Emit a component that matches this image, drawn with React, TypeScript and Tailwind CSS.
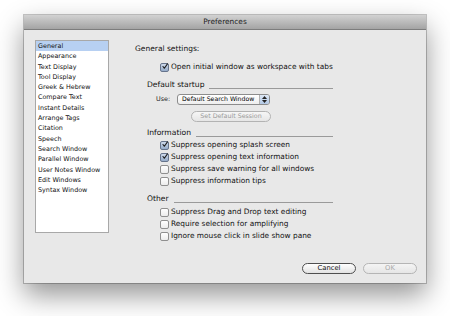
import React from "react";

const font = { fontFamily: '"DejaVu Sans", "Liberation Sans", sans-serif' };

function Check({ checked }: { checked?: boolean }) {
  return (
    <div
      className={
        "w-[9px] h-[9px] rounded-[2px] border shrink-0 flex items-center justify-center " +
        (checked
          ? "border-[#66748c] bg-gradient-to-b from-[#cdd9ea] to-[#95abc9]"
          : "border-[#8f8f8f] bg-gradient-to-b from-[#ffffff] to-[#ececec]")
      }
    >
      {checked && (
        <svg width="9" height="9" viewBox="0 0 9 9" className="-mt-[2px] ml-[1px]">
          <path d="M1.5 4.5 L3.6 7.2 L8.2 0.5" fill="none" stroke="#1d1d1d" strokeWidth="1.6" strokeLinecap="round" strokeLinejoin="round" />
        </svg>
      )}
    </div>
  );
}

function CheckRow({ label, checked, className = "" }: { label: string; checked?: boolean; className?: string }) {
  return (
    <div className={"flex items-center gap-[2px] h-[12px] pl-[25px] " + className}>
      <Check checked={checked} />
      <span className="text-[7.4px] text-[#111] leading-none whitespace-nowrap">{label}</span>
    </div>
  );
}

function Group({ label, className = "" }: { label: string; className?: string }) {
  return (
    <div className={"flex items-center h-[12px] ml-[12px] w-[186px] " + className}>
      <span className="text-[7.6px] text-[#111] leading-none whitespace-nowrap">{label}</span>
      <div className="flex-1 h-px bg-[#9a9a9a] ml-[5px] mt-[6px]" />
    </div>
  );
}

const items = [
  "General",
  "Appearance",
  "Text Display",
  "Tool Display",
  "Greek & Hebrew",
  "Compare Text",
  "Instant Details",
  "Arrange Tags",
  "Citation",
  "Speech",
  "Search Window",
  "Parallel Window",
  "User Notes Window",
  "Edit Windows",
  "Syntax Window",
];

export default function App() {
  return (
    <div className="w-[450px] h-[316px] bg-white overflow-hidden pt-[15px] pl-[24px]" style={font}>
      <div className="w-[402px] h-[268px] bg-[#e8e8e8] flex flex-col shadow-[0_0_0_1px_rgba(0,0,0,0.22),0_12px_26px_rgba(0,0,0,0.42)]">
        {/* title bar */}
        <div className="h-[15px] shrink-0 bg-gradient-to-b from-[#d2d2d2] to-[#a4a4a4] border-b border-[#7d7d7d] flex items-center justify-center">
          <span className="text-[7.4px] text-[#202020] leading-none">Preferences</span>
        </div>
        {/* main */}
        <div className="flex-1 flex pt-[10px] pl-[11px]">
          <div className="w-[74px] h-[193px] bg-white border border-[#a8a8a8] shrink-0 flex flex-col">
            {items.map((it, i) => (
              <div
                key={it}
                className={
                  "h-[10.3px] pl-[2px] flex items-center text-[6.4px] leading-none text-[#111] whitespace-nowrap " +
                  (i === 0 ? "bg-[#b7d0f2]" : "")
                }
              >
                {it}
              </div>
            ))}
          </div>
          <div className="ml-[26px] flex flex-col">
            <div className="h-[12px] mt-[3px] flex items-center text-[7.5px] leading-none text-[#111] whitespace-nowrap">
              General settings:
            </div>
            <CheckRow className="mt-[6px]" checked label="Open initial window as workspace with tabs" />
            <Group className="mt-[6px]" label="Default startup" />
            <div className="h-[12px] mt-[2px] flex items-center pl-[21px]">
              <span className="text-[6.4px] leading-none text-[#222]">Use:</span>
              <div className="ml-[7px] w-[93px] h-[11px] rounded-[3px] border border-[#8c8c8c] bg-gradient-to-b from-white to-[#eeeeee] flex items-center">
                <span className="flex-1 pl-[4px] text-[6.2px] leading-none text-[#000] whitespace-nowrap overflow-hidden">Default Search Window</span>
                <div className="w-[10px] shrink-0 h-full border-l border-[#b0b0b0] rounded-r-[2px] bg-gradient-to-b from-[#dde8f6] to-[#b2c8e5] flex flex-col items-center justify-center gap-[1px]">
                  <svg width="5" height="3" viewBox="0 0 5 3"><path d="M0 3 L2.5 0 L5 3Z" fill="#222" /></svg>
                  <svg width="5" height="3" viewBox="0 0 5 3"><path d="M0 0 L2.5 3 L5 0Z" fill="#222" /></svg>
                </div>
              </div>
            </div>
            <div className="h-[11px] mt-[6px] pl-[56px] flex">
              <div className="w-[80px] h-[11px] rounded-full border border-[#b3b3b3] bg-gradient-to-b from-[#f6f6f6] to-[#e6e6e6] flex items-center justify-center">
                <span className="text-[6.3px] leading-none text-[#9a9a9a] whitespace-nowrap">Set Default Session</span>
              </div>
            </div>
            <Group className="mt-[5px]" label="Information" />
            <CheckRow checked label="Suppress opening splash screen" />
            <CheckRow checked label="Suppress opening text information" />
            <CheckRow label="Suppress save warning for all windows" />
            <CheckRow label="Suppress information tips" />
            <Group className="mt-[6px]" label="Other" />
            <CheckRow className="mt-[1px]" label="Suppress Drag and Drop text editing" />
            <CheckRow label="Require selection for amplifying" />
            <CheckRow label="Ignore mouse click in slide show pane" />
          </div>
        </div>
        {/* footer */}
        <div className="h-[11px] mb-[9px] flex justify-end gap-[7px] pr-[9px] shrink-0">
          <div className="w-[54px] h-[11px] rounded-full border border-[#4f4f4f] bg-gradient-to-b from-white to-[#e2e2e2] flex items-center justify-center">
            <span className="text-[6.8px] leading-none text-[#111]">Cancel</span>
          </div>
          <div className="w-[54px] h-[11px] rounded-full border border-[#b5b5b5] bg-gradient-to-b from-[#f4f4f4] to-[#e6e6e6] flex items-center justify-center">
            <span className="text-[6.8px] leading-none text-[#a8a8a8]">OK</span>
          </div>
        </div>
      </div>
    </div>
  );
}
